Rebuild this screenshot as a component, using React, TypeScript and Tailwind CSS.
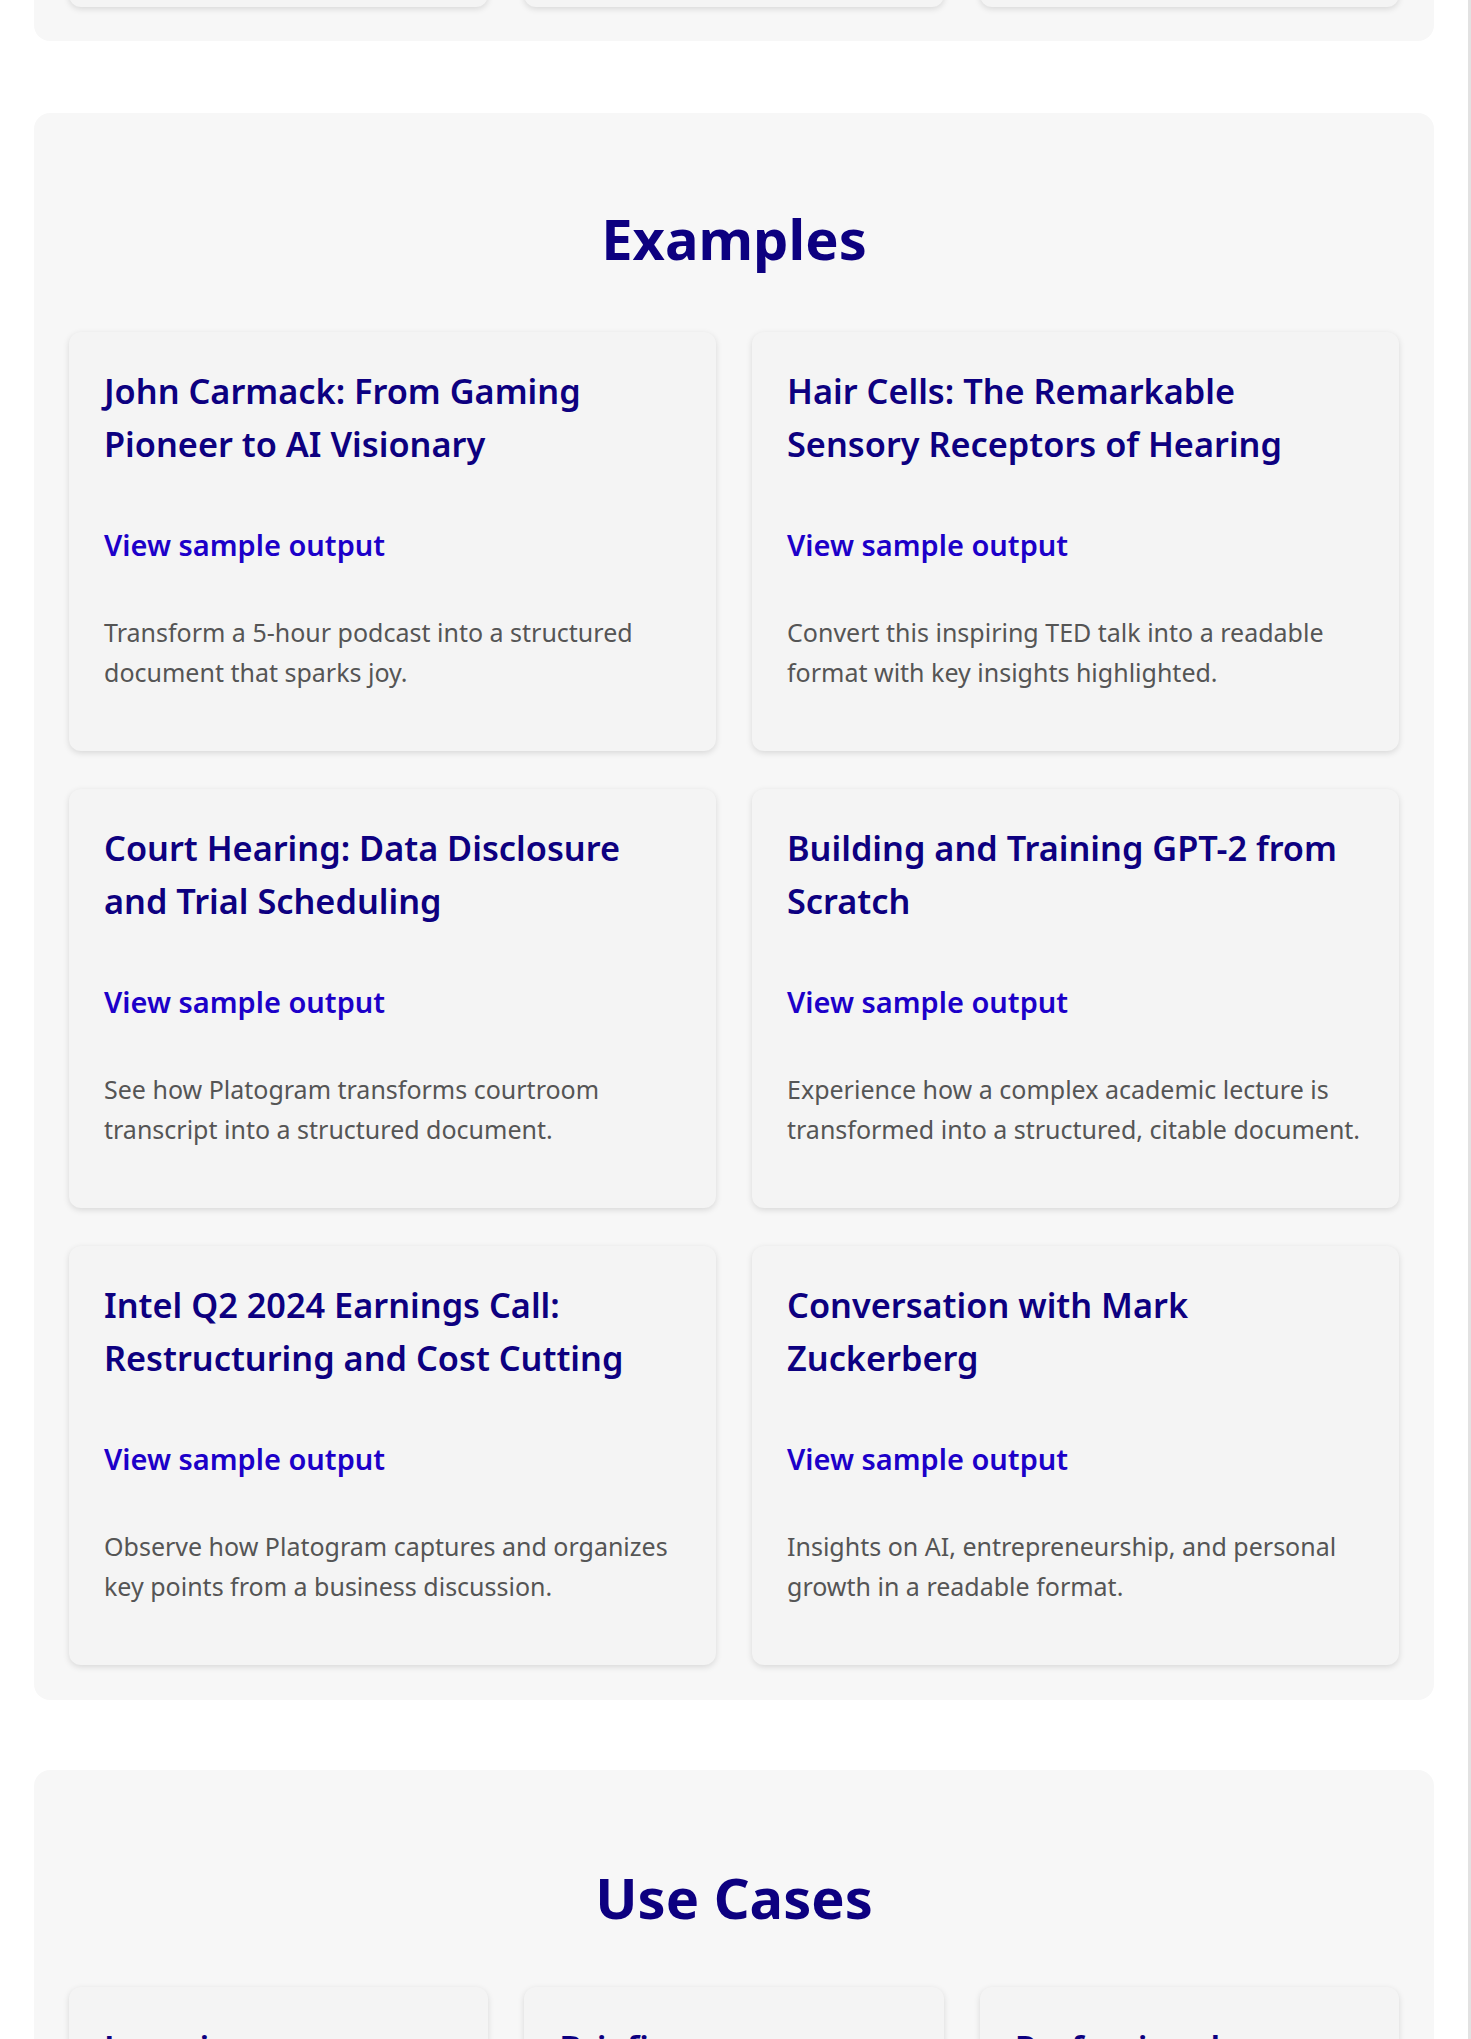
const examples = [
  {
    title: 'John Carmack: From Gaming Pioneer to AI Visionary',
    text: 'Transform a 5-hour podcast into a structured document that sparks joy.',
  },
  {
    title: 'Hair Cells: The Remarkable Sensory Receptors of Hearing',
    text: 'Convert this inspiring TED talk into a readable format with key insights highlighted.',
  },
  {
    title: 'Court Hearing: Data Disclosure and Trial Scheduling',
    text: 'See how Platogram transforms courtroom transcript into a structured document.',
  },
  {
    title: 'Building and Training GPT-2 from Scratch',
    text: 'Experience how a complex academic lecture is transformed into a structured, citable document.',
  },
  {
    title: 'Intel Q2 2024 Earnings Call: Restructuring and Cost Cutting',
    text: 'Observe how Platogram captures and organizes key points from a business discussion.',
  },
  {
    title: 'Conversation with Mark Zuckerberg',
    text: 'Insights on AI, entrepreneurship, and personal growth in a readable format.',
  },
];

const useCases = [
  { title: 'Learning', text: 'Turn lectures and talks into study notes you can search and cite.' },
  { title: 'Briefings', text: 'Get the key points of long meetings and calls in minutes.' },
  { title: 'Professionals', text: 'Create documents from recordings for clients and teams.' },
];

const card = 'rounded-xl bg-[#f4f4f4] shadow-[0_2px_6px_rgba(0,0,0,0.13)]';

function ExampleCard({ title, text }: { title: string; text: string }) {
  return (
    <div className={`${card} px-[35px] pt-[33px] pb-[59px]`}>
      <h3 className="text-[34.3px] leading-[52.5px] font-semibold text-[#0d0080]">{title}</h3>
      <a href="#" className="mt-[54px] block text-[29px] leading-[42px] font-semibold text-[#1c00c9]">
        View sample output
      </a>
      <p className="mt-[46px] text-[25px] leading-[40px] text-[#555555]">{text}</p>
    </div>
  );
}

export default function App() {
  return (
    <div
      className="flex h-[2039px] overflow-hidden bg-white"
      style={{ fontFamily: '"Noto Sans", "Open Sans", sans-serif' }}
    >
      <main className="flex-1 px-[34px]">
        {/* previous section, scrolled past */}
        <section className="-mt-[40px] rounded-2xl bg-[#f7f7f7] px-[35px] pb-[34px]">
          <div className="grid grid-cols-3 gap-[36px]">
            {[0, 1, 2].map((i) => (
              <div key={i} className={`${card} h-[47px]`} />
            ))}
          </div>
        </section>

        {/* Examples */}
        <section className="mt-[72px] rounded-2xl bg-[#f7f7f7] px-[35px] pt-[92px] pb-[35px]">
          <h2 className="text-center text-[56px] leading-[67px] font-bold text-[#0d0080]">Examples</h2>
          <div className="mt-[60px] grid grid-cols-2 gap-x-[36px] gap-y-[38px]">
            {examples.map((e) => (
              <ExampleCard key={e.title} title={e.title} text={e.text} />
            ))}
          </div>
        </section>

        {/* Use Cases */}
        <section className="mt-[70px] rounded-2xl bg-[#f7f7f7] px-[35px] pt-[94px] pb-[36px]">
          <h2 className="text-center text-[56px] leading-[67px] font-bold text-[#0d0080]">Use Cases</h2>
          <div className="mt-[56px] grid grid-cols-3 gap-[36px]">
            {useCases.map((u) => (
              <div key={u.title} className={`${card} px-[35px] pt-[35px] pb-[58px]`}>
                <h3 className="text-[34.3px] leading-[52.5px] font-semibold text-[#0d0080]">{u.title}</h3>
                <p className="mt-[40px] text-[25px] leading-[40px] text-[#555555]">{u.text}</p>
              </div>
            ))}
          </div>
        </section>
      </main>
      <div className="w-[3px] shrink-0 bg-[#e2e2e2]" />
    </div>
  );
}
